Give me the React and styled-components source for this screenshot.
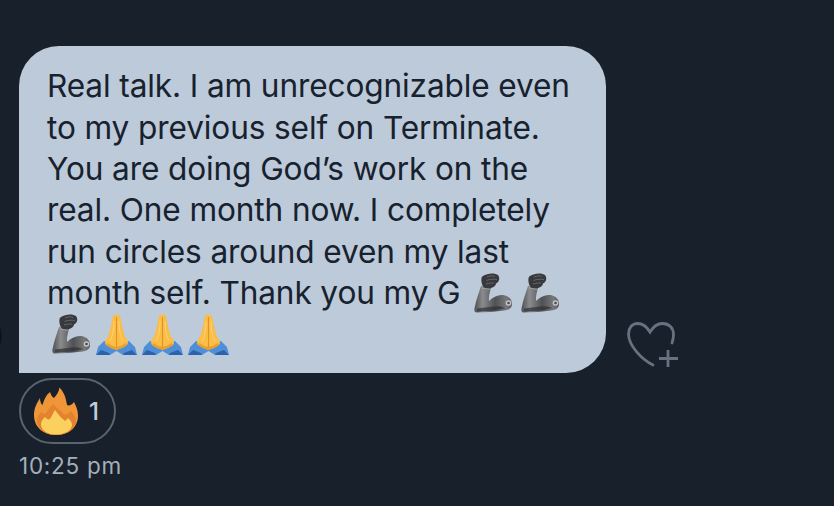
import React from "react";
import styled, { createGlobalStyle } from "styled-components";

const Global = createGlobalStyle`
  html, body { margin: 0; padding: 0; background: #18202c; }
  body { width: 834px; height: 506px; overflow: hidden; font-family: Inter, "Noto Sans", sans-serif; }
`;
const Page = styled.main`
  position: relative;
  width: 834px; height: 506px; box-sizing: border-box; padding: 46px 0 0 19px;
  background: #18202c; display: flex; flex-direction: column; align-items: flex-start;
`;
const EdgeShadow = styled.div`
  position: absolute; left: -7px; top: 326px; width: 9px; height: 20px; border-radius: 50%; background: #0e141c;
`;
const MessageRow = styled.div`display: flex; align-items: flex-end; gap: 21px;`;
const Bubble = styled.div`
  width: 587px; height: 327px; box-sizing: border-box; padding: 19px 0 0 28px;
  background: #bccad9; color: #18212e;
  border-radius: 40px 40px 40px 0;
  font-size: 31.6px; letter-spacing: -0.12px;
`;
const Line = styled.div`white-space: nowrap; height: 41.4px; display: flex; align-items: center;`;
const EmojiGroup = styled.span`display: inline-flex; align-items: center; gap: ${p => p.$gap}px; margin-left: ${p => p.$left}px;`;
const HeartButton = styled.div`display: flex; margin-bottom: 4px; color: #66727f;`;
const Reaction = styled.div`
  margin-top: 5px; width: 97px; height: 66px; box-sizing: border-box; border: 2px solid #596470;
  border-radius: 33px; display: flex; align-items: center; padding-left: 13px; gap: 11px;
  color: #c2cedb; font-size: 24px; font-weight: 500;
`;
const Time = styled.div`margin-top: 8px; color: #a3afbb; font-size: 22.5px; line-height: 28px; letter-spacing: 0.75px;`;

const Bicep = () => (
  <svg width="39" height="40" viewBox="0 0 39 40">
    <defs>
      <linearGradient id="arm" x1="0" y1="0" x2="1" y2="0">
        <stop offset="0" stopColor="#4f5053" /><stop offset="0.22" stopColor="#8a8b8d" /><stop offset="0.55" stopColor="#505154" /><stop offset="0.85" stopColor="#77787a" /><stop offset="1" stopColor="#5a5b5e" />
      </linearGradient>
    </defs>
    <path d="M7 13 L17 15 C16 19 14.500 23 15 28 C19 24 24 21.500 29 22 C34 22.500 38 26 38 31 C38 35 35 37 30 37.500 C22 38.500 11 39.500 3 39.500 C0 39.500 0 37 1 33 C2.500 26 5 19 7 13Z" fill="url(#arm)" />
    <path d="M3 38.500 C12 38.500 23 37.500 31 35 C27 33 22 33 15.500 34 L3 35.500Z" fill="#2f3033" opacity="0.7" />
    <path d="M9 3 C13 0 21 -0.500 24 2 C26.500 5 25 9 22 10.500 C21.500 14 17 16 11 15 C8 14 7 8 7.500 5.500 C7.500 4.500 8 3.500 9 3Z" fill="#38393c" />
    <path d="M13 4 C16 2.500 19 2.500 21 3.500 M12.500 7.500 C16 6 20 6 23 6.500 M12 11 C15 10 18 10 20 10" stroke="#66676a" strokeWidth="1" fill="none" />
    <path d="M7.500 15 L17 16.500" stroke="#a5a6a8" strokeWidth="0.8" />
    <circle cx="34.500" cy="30" r="2.800" fill="#c4c5c7" />
    <circle cx="34.500" cy="30" r="1.300" fill="#4a4a4c" />
  </svg>
);
const Pray = () => (
  <svg width="41" height="41" viewBox="0 0 41 41">
    <path d="M0 41 L2 33 L8 27 L14 29 L20.500 35 L27 29 L33 27 L39 33 L41 41 L27 41 L20.500 37 L14 41Z" fill="#4f8fd8" />
    <path d="M0 41 L5 36 L13 39 L14 41Z M41 41 L36 36 L28 39 L27 41Z" fill="#2b62a9" />
    <path d="M20.500 36 C17 35 13 33 10 31 C8.500 29.500 9 27 11 24 C14 19 15 12 16.500 4 C17.200 0.500 19.500 -0.500 20.500 1.500 C21.500 -0.500 23.800 0.500 24.500 4 C26 12 27 19 30 24 C32 27 32.500 29.500 31 31 C28 33 24 35 20.500 36Z" fill="#fbbd45" />
    <path d="M20.500 3 L20.500 34" stroke="#dd9428" strokeWidth="1.100" />
    <path d="M18 7 C18 15 17 22 14 27 M23 7 C23 15 24 22 27 27" stroke="#fdd27a" strokeWidth="1" fill="none" />
    <path d="M10 31 C13 33 17 35 20.500 36 C24 35 28 33 31 31 L29.500 29 C26 32 23 32.500 20.500 33 C18 32.500 15 32 11.500 29Z" fill="#e99f2e" />
  </svg>
);
const Flame = () => (
  <svg width="44" height="48" viewBox="0 0 44 48">
    <path d="M22 48 C9 48 0 40 0 28 C0 21 3 16 6 11 C6 14 7 17 8.500 18 C10 13 12 8 16 5 C17 8 18 10 20 11 C23 8 25 4 25.500 0.500 C30 5 32 11 33 18 C35 19 38 18 40 15 C42 19 44 23 44 29 C44 40 35 48 22 48Z" fill="#ef9738" />
    <path d="M22 48 C10 48 3 41 3 33 C3 30 5 27 7 25 C9 27 11 27 12 26 C14 22 17 20 19 17 C22 20 27 24 31 28 C33 27 35 26 37 24 C40 27 42 30 42 34 C42 42 33 48 22 48Z" fill="#e4832f" />
    <path d="M22 47.500 C13 47.500 7 43 7 37 C7 34 9 32 11 30 C13 32 14 33 16 32 C18 29 19 26 21 23 C24 27 27 31 31 34 C32 33 33 32.500 34 31 C36 33 38 35 38 38 C38 43 31 47.500 22 47.500Z" fill="#fbd05f" />
  </svg>
);
const HeartPlus = () => (
  <svg width="52" height="47" viewBox="0 0 52 47" fill="none" stroke="currentColor" strokeWidth="2.800" strokeLinecap="round">
    <path d="M45 21 C46 18 46.500 15.500 46.500 12.500 C46.500 6 42 1.500 35.500 1.500 C30 1.500 26 5 23 10 C20 5 16 1.500 10.500 1.500 C5 1.500 1.500 6 1.500 12 C1.500 23 14 37 26 43" />
    <path d="M41 28 L41 45 M32 36.500 L51 36.500" strokeLinecap="butt" />
  </svg>
);

export default function App() {
  return (
    <>
      <Global />
      <Page>
        <EdgeShadow />
        <MessageRow>
          <Bubble>
            <Line>Real talk. I am unrecognizable even</Line>
            <Line>to my previous self on Terminate.</Line>
            <Line>You are doing God’s work on the</Line>
            <Line>real. One month now. I completely</Line>
            <Line>run circles around even my last</Line>
            <Line>month self. Thank you my G<EmojiGroup $left={13} $gap={8}><Bicep /><Bicep /></EmojiGroup></Line>
            <Line><EmojiGroup $left={5} $gap={5}><Bicep /><Pray /><Pray /><Pray /></EmojiGroup></Line>
          </Bubble>
          <HeartButton><HeartPlus /></HeartButton>
        </MessageRow>
        <Reaction><Flame /><span>1</span></Reaction>
        <Time>10:25 pm</Time>
      </Page>
    </>
  );
}
